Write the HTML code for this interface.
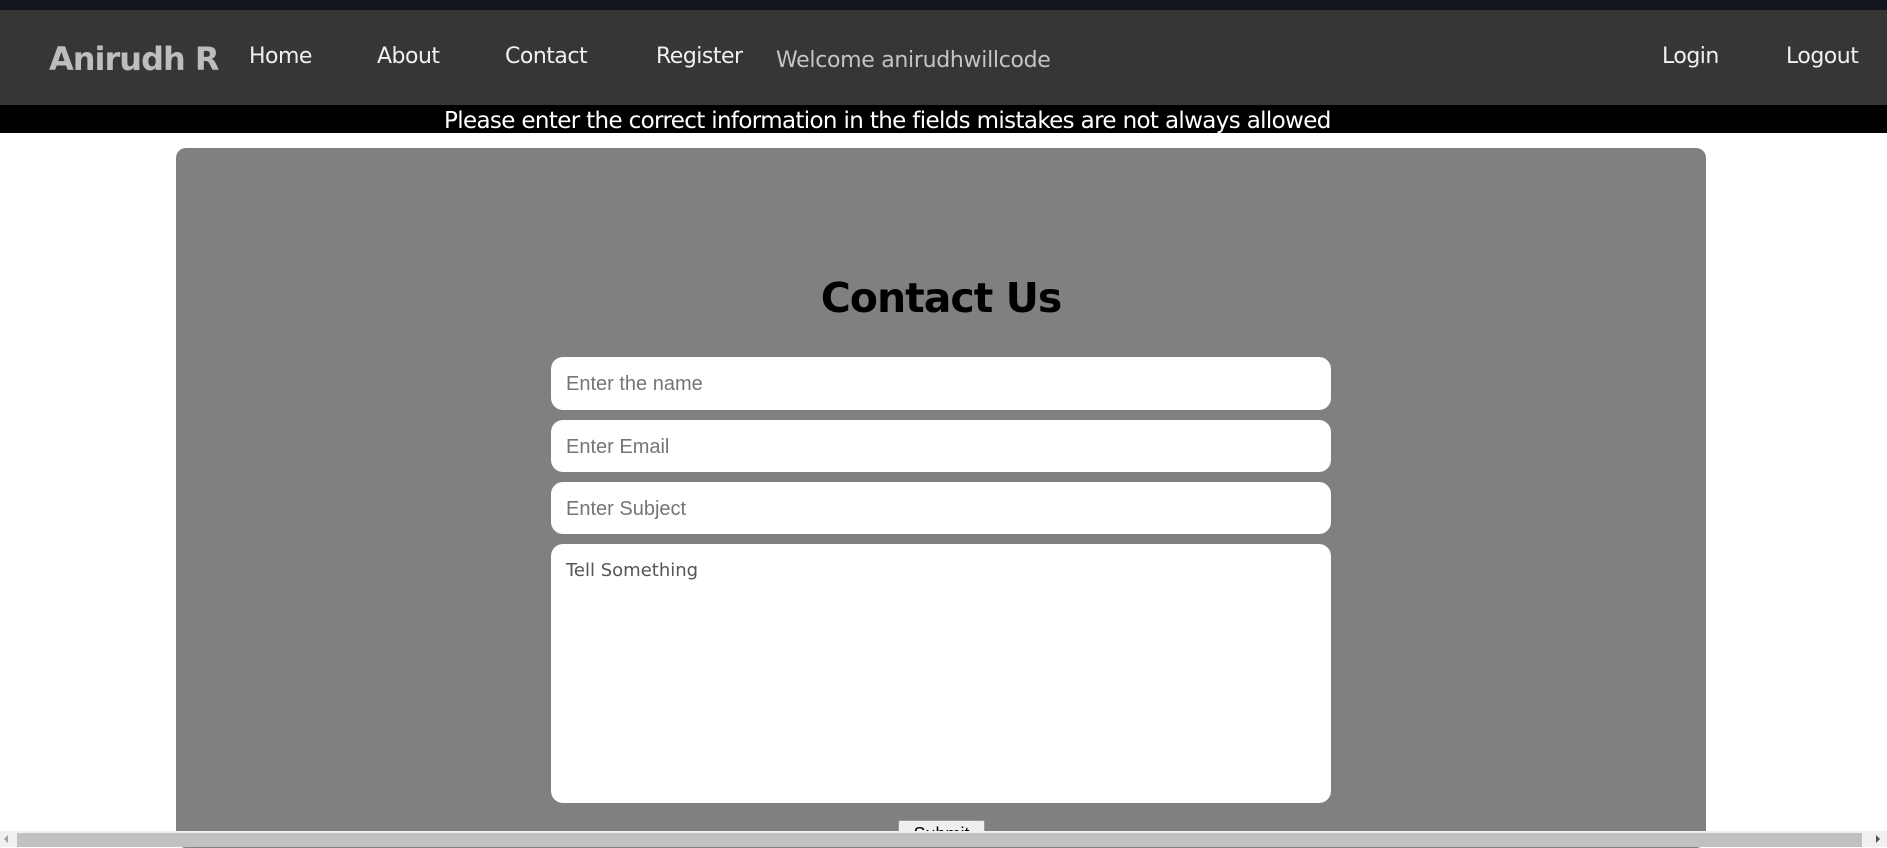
<!DOCTYPE html>
<html><head><style>
body{margin:0;width:1887px;height:847px;overflow:hidden;position:relative;background:#fff;font-family:"DejaVu Sans","Liberation Sans",sans-serif;}
.a{position:absolute;white-space:nowrap}
#top{left:0;top:0;width:1887px;height:10px;background:#14161e}
#nav{left:0;top:10px;width:1887px;height:95px;background:#363636}
#ban{left:0;top:105px;width:1887px;height:28px;background:#000}
.n{color:#f0f0f0;font-size:22px;top:44px;letter-spacing:-0.5px}
#box{left:176px;top:148px;width:1530px;height:700px;background:#808080;border-radius:10px}
.in{position:absolute;left:551px;width:780px;background:#fff;border-radius:12px;box-sizing:border-box;padding-left:15px;color:#757575;font-family:"Liberation Sans",sans-serif;font-size:20px}
</style></head><body>
<div class="a" id="top"></div>
<div class="a" id="nav"></div>
<div class="a" style="left:49px;top:40px;font-size:32px;font-weight:bold;color:#bdbdbd;letter-spacing:-1px">Anirudh R</div>
<div class="a n" style="left:249px">Home</div>
<div class="a n" style="left:377px">About</div>
<div class="a n" style="left:505px">Contact</div>
<div class="a n" style="left:656px">Register</div>
<div class="a" style="left:776px;top:48px;font-size:22px;color:#c4c4c4;letter-spacing:-0.3px">Welcome anirudhwillcode</div>
<div class="a n" style="left:1662px">Login</div>
<div class="a n" style="left:1786px">Logout</div>
<div class="a" id="ban"></div>
<div class="a" style="left:444px;top:107px;font-size:23px;color:#fff;line-height:28px;letter-spacing:-0.65px">Please enter the correct information in the fields mistakes are not always allowed</div>
<div class="a" id="box"></div>
<div class="a" style="left:551px;width:780px;top:274px;text-align:center;font-size:41px;font-weight:bold;color:#000;letter-spacing:-1px">Contact Us</div>
<div class="in" style="top:357px;height:53px;line-height:55px">Enter the name</div>
<div class="in" style="top:420px;height:52px;line-height:54px">Enter Email</div>
<div class="in" style="top:482px;height:52px;line-height:54px">Enter Subject</div>
<div class="in" style="top:544px;height:259px;padding-top:16px;font-family:'DejaVu Sans',sans-serif;font-size:18px;color:#555">Tell Something</div>
<div class="a" style="left:898px;top:820px;width:85px;height:15px;background:#efefef;border:1px solid #999;border-radius:2px;font-family:'Liberation Sans';font-size:18px;text-align:center;line-height:26px;overflow:hidden">Submit</div>
<div class="a" style="left:0;top:831px;width:1887px;height:16px;background:#f0f0f0"></div>
<div class="a" style="left:17px;top:833px;width:1845px;height:14px;background:#c1c1c1"></div>
<div class="a" style="left:4px;top:835px;width:0;height:0;border-top:4px solid transparent;border-bottom:4px solid transparent;border-right:4px solid #a0a0a0"></div>
<div class="a" style="left:1876px;top:835px;width:0;height:0;border-top:4px solid transparent;border-bottom:4px solid transparent;border-left:4px solid #505050"></div>
</body></html>
